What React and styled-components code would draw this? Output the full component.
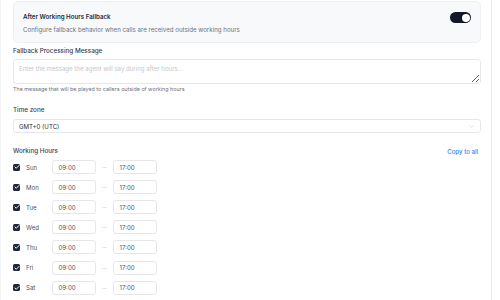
import React from 'react'
import styled, { createGlobalStyle } from 'styled-components'

const GlobalStyle = createGlobalStyle`
    html, body {
        margin     : 0;
        padding    : 0;
        background : #ffffff;
    }
    body {
        font-family : Inter, "Noto Sans", sans-serif;
        color       : #111827;
    }
`

const days = ['Sun', 'Mon', 'Tue', 'Wed', 'Thu', 'Fri', 'Sat']

const App = () => {
    return (
        <>
            <GlobalStyle />
            <Page>
                <FallbackCard>
                    <CardText>
                        <CardTitle>After Working Hours Fallback</CardTitle>
                        <CardDescription>Configure fallback behavior when calls are received outside working hours</CardDescription>
                    </CardText>
                    <Toggle aria-checked="true" role="switch">
                        <Knob />
                    </Toggle>
                </FallbackCard>

                <Field $top={4}>
                    <Label>Fallback Processing Message</Label>
                    <TextArea placeholder="Enter the message the agent will say during after hours..." />
                    <Hint>The message that will be played to callers outside of working hours</Hint>
                </Field>

                <Field $top={13}>
                    <Label>Time zone</Label>
                    <Select>
                        <span>GMT+0 (UTC)</span>
                        <svg width="7" height="7" viewBox="0 0 24 24" fill="none" stroke="#c4c8cf" strokeWidth="2" strokeLinecap="round" strokeLinejoin="round">
                            <path d="m6 9 6 6 6-6" />
                        </svg>
                    </Select>
                </Field>

                <HoursHeader>
                    <Label>Working Hours</Label>
                    <CopyLink>Copy to all</CopyLink>
                </HoursHeader>

                <DayList>
                    {days.map(day => (
                        <DayRow key={day}>
                            <Check>
                                <svg width="6" height="6" viewBox="0 0 24 24" fill="none" stroke="#ffffff" strokeWidth="4" strokeLinecap="round" strokeLinejoin="round">
                                    <path d="M20 6 9 17l-5-5" />
                                </svg>
                            </Check>
                            <DayName>{day}</DayName>
                            <TimeBox>09:00</TimeBox>
                            <Dash>—</Dash>
                            <TimeBox>17:00</TimeBox>
                        </DayRow>
                    ))}
                </DayList>
            </Page>
        </>
    )
}

export default App

const Page = styled.div`
    box-sizing   : border-box;
    width        : 492px;
    height       : 300px;
    padding      : 1px 11px 0 12px;
    border-left  : 1px solid #f3f4f6;
    border-right : 1px solid #e9eaed;
    overflow     : hidden;
`

const FallbackCard = styled.div`
    box-sizing       : border-box;
    display          : flex;
    justify-content  : space-between;
    align-items      : flex-start;
    width            : 468px;
    height           : 42px;
    padding          : 11px 9px 0 9px;
    background-color : #f8f9fb;
    border           : 1px solid #eef0f3;
    border-radius    : 5px;
`

const CardText = styled.div`
    display        : flex;
    flex-direction : column;
    gap            : 5px;
`

const CardTitle = styled.div`
    font-size   : 6.2px;
    font-weight : 600;
    line-height : 8px;
    color       : #1f2937;
`

const CardDescription = styled.div`
    font-size   : 6.15px;
    line-height : 8px;
    color       : #6b7280;
`

const Toggle = styled.div`
    position         : relative;
    box-sizing       : border-box;
    width            : 21px;
    height           : 11px;
    margin-top       : -1px;
    border-radius    : 6px;
    background-color : #111827;
`

const Knob = styled.div`
    position         : absolute;
    top              : 1.5px;
    right            : 1.5px;
    width            : 8px;
    height           : 8px;
    border-radius    : 50%;
    background-color : #ffffff;
`

const Field = styled.div`
    display        : flex;
    flex-direction : column;
    margin-top     : ${p => p.$top || 2}px;
`

const Label = styled.div`
    font-size   : 6.3px;
    font-weight : 500;
    line-height : 8px;
    color       : #374151;
`

const TextArea = styled.textarea`
    box-sizing    : border-box;
    width         : 468px;
    height        : 25px;
    margin        : 4px 0 0;
    padding       : 5px 5px;
    font-family   : Inter, "Noto Sans", sans-serif;
    font-size     : 6.1px;
    line-height   : 8px;
    border        : 1px solid #e5e7eb;
    border-radius : 3px;
    resize        : vertical;
    outline       : none;

    &::placeholder {
        color : #c3c7ce;
    }
`

const Hint = styled.div`
    margin-top  : 2px;
    font-size   : 5.4px;
    line-height : 7px;
    color       : #6b7280;
`

const Select = styled.div`
    box-sizing      : border-box;
    display         : flex;
    align-items     : center;
    justify-content : space-between;
    width           : 468px;
    height          : 14px;
    margin-top      : 5px;
    padding         : 0 5px 0 5px;
    font-size       : 6.1px;
    color           : #1f2937;
    border          : 1px solid #e5e7eb;
    border-radius   : 3px;
`

const HoursHeader = styled.div`
    display         : flex;
    justify-content : space-between;
    align-items     : center;
    width           : 465px;
    margin-top      : 14px;
`

const CopyLink = styled.a`
    font-size   : 6.1px;
    font-weight : 500;
    color       : #3b82f6;
    cursor      : pointer;
`

const DayList = styled.div`
    display        : flex;
    flex-direction : column;
    gap            : 6px;
    margin-top     : 5px;
`

const DayRow = styled.div`
    display     : flex;
    align-items : center;
    height      : 14.1px;
`

const Check = styled.div`
    display          : flex;
    align-items      : center;
    justify-content  : center;
    width            : 7px;
    height           : 7px;
    border-radius    : 1.5px;
    background-color : #1f2937;
`

const DayName = styled.div`
    width       : 26px;
    margin-left : 6px;
    font-size   : 6.1px;
    color       : #4b5563;
`

const TimeBox = styled.div`
    box-sizing    : border-box;
    display       : flex;
    align-items   : center;
    width         : 44px;
    height        : 14px;
    padding-left  : 5.5px;
    font-size     : 6.1px;
    color         : #4b5563;
    border        : 1px solid #e5e7eb;
    border-radius : 3px;
`

const Dash = styled.div`
    width      : 17px;
    text-align : center;
    font-size  : 5px;
    color      : #c4c8cf;
`
